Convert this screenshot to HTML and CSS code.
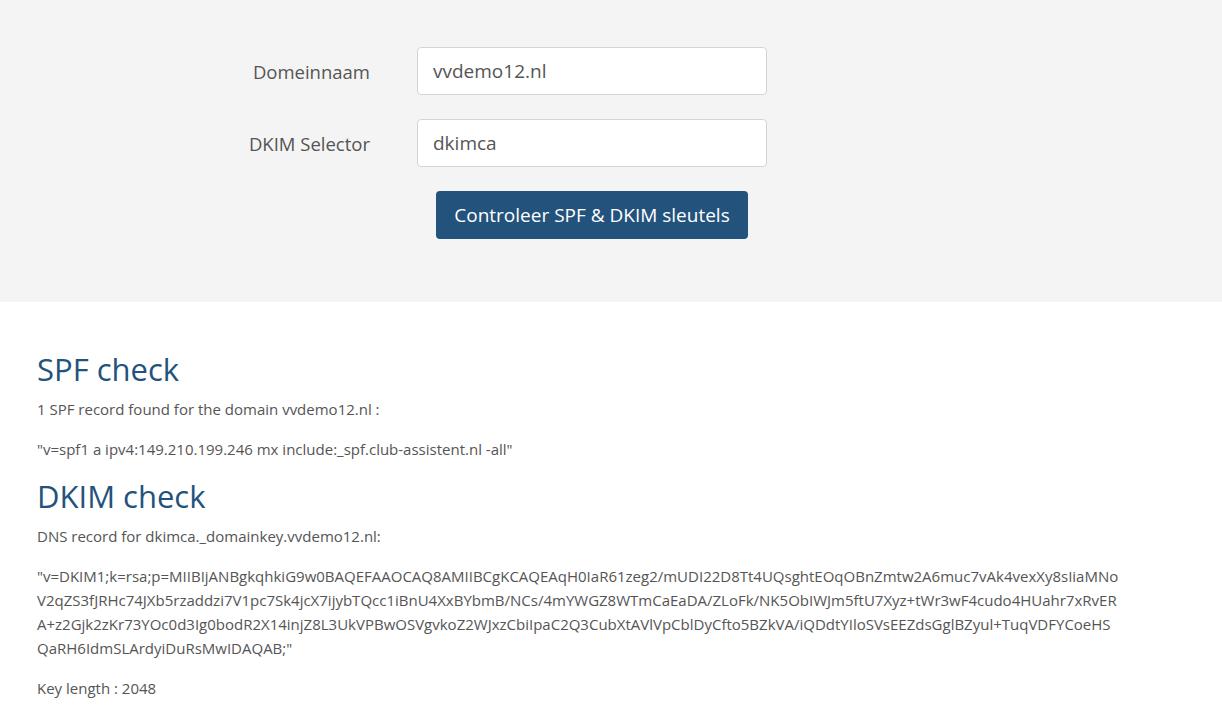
FILE: index.html
```html
<!DOCTYPE html>
<html lang="nl">
<head>
<meta charset="utf-8">
<title>SPF &amp; DKIM check</title>
<link rel="stylesheet" href="styles.css">
</head>
<body>
<section class="band">
  <form class="check-form">
    <label class="form-label" for="domain">Domeinnaam</label>
    <input class="form-input" id="domain" type="text" value="vvdemo12.nl">
    <label class="form-label" for="selector">DKIM Selector</label>
    <input class="form-input" id="selector" type="text" value="dkimca">
    <button class="btn" type="button">Controleer SPF &amp; DKIM sleutels</button>
  </form>
</section>
<main class="results">
  <h2 class="result-title">SPF check</h2>
  <p class="result-text">1 SPF record found for the domain vvdemo12.nl :</p>
  <p class="result-text">"v=spf1 a ipv4:149.210.199.246 mx include:_spf.club-assistent.nl -all"</p>
  <h2 class="result-title">DKIM check</h2>
  <p class="result-text">DNS record for dkimca._domainkey.vvdemo12.nl:</p>
  <p class="result-text key">"v=DKIM1;k=rsa;p=MIIBIjANBgkqhkiG9w0BAQEFAAOCAQ8AMIIBCgKCAQEAqH0IaR61zeg2/mUDI22D8Tt4UQsghtEOqOBnZmtw2A6muc7vAk4vexXy8sIiaMNo<br>V2qZS3fJRHc74JXb5rzaddzi7V1pc7Sk4jcX7ijybTQcc1iBnU4XxBYbmB/NCs/4mYWGZ8WTmCaEaDA/ZLoFk/NK5ObIWJm5ftU7Xyz+tWr3wF4cudo4HUahr7xRvER<br>A+z2Gjk2zKr73YOc0d3Ig0bodR2X14injZ8L3UkVPBwOSVgvkoZ2WJxzCbiIpaC2Q3CubXtAVlVpCblDyCfto5BZkVA/iQDdtYIloSVsEEZdsGglBZyul+TuqVDFYCoeHS<br>QaRH6IdmSLArdyiDuRsMwIDAQAB;"</p>
  <p class="result-text">Key length : 2048</p>
</main>
</body>
</html>
```
FILE: styles.css
```css
html, body {
  margin: 0;
  padding: 0;
  background: #ffffff;
  font-family: "Open Sans", "Noto Sans", "Liberation Sans", sans-serif;
  color: #555555;
}

.band {
  background: #f4f4f4;
  padding: 47px 0 63px;
}

.check-form {
  display: grid;
  grid-template-columns: 370px 350px;
  column-gap: 47px;
  row-gap: 24px;
  align-items: center;
}

.form-label {
  text-align: right;
  font-size: 18.5px;
  color: #555555;
}

.form-input {
  grid-column: 2;
  box-sizing: border-box;
  height: 48px;
  width: 350px;
  padding: 0 15px;
  border: 1px solid #d4d4d4;
  border-radius: 4px;
  background: #ffffff;
  font-family: inherit;
  font-size: 19px;
  color: #555555;
  outline: none;
}

.btn {
  grid-column: 2;
  justify-self: center;
  height: 48px;
  padding: 0 18px;
  border: none;
  border-radius: 4px;
  background: #23527c;
  color: #ffffff;
  font-family: inherit;
  font-size: 19px;
}

.results {
  padding: 32px 37px 10px;
}

.result-title {
  margin: 18px 0 10px;
  font-size: 31px;
  line-height: 35px;
  font-weight: 400;
  color: #23527c;
}

.result-text {
  margin: 0 0 16px;
  font-size: 15px;
  line-height: 24px;
}
```
